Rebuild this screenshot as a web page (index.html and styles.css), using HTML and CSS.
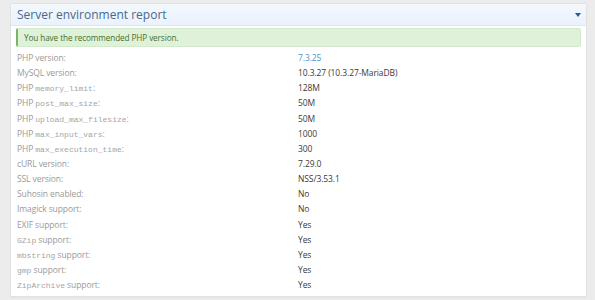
FILE: index.html
```html
<!DOCTYPE html>
<html lang="en">
<head>
  <meta charset="UTF-8" />
  <title>Server environment report</title>
  <link rel="stylesheet" href="styles.css">
</head>
<body>
  <div class="block">
    <div class="block-header">
      <h2 class="block-title">Server environment report</h2>
      <span class="toggle"></span>
    </div>
    <div class="block-body">
      <div class="alert-success">You have the recommended PHP version.</div>
      <dl class="pairs">
        <div class="pair"><dt>PHP version:</dt><dd class="good">7.3.25</dd></div>
        <div class="pair"><dt>MySQL version:</dt><dd>10.3.27 (10.3.27-MariaDB)</dd></div>
        <div class="pair"><dt>PHP <code>memory_limit</code>:</dt><dd>128M</dd></div>
        <div class="pair"><dt>PHP <code>post_max_size</code>:</dt><dd>50M</dd></div>
        <div class="pair"><dt>PHP <code>upload_max_filesize</code>:</dt><dd>50M</dd></div>
        <div class="pair"><dt>PHP <code>max_input_vars</code>:</dt><dd>1000</dd></div>
        <div class="pair"><dt>PHP <code>max_execution_time</code>:</dt><dd>300</dd></div>
        <div class="pair"><dt>cURL version:</dt><dd>7.29.0</dd></div>
        <div class="pair"><dt>SSL version:</dt><dd>NSS/3.53.1</dd></div>
        <div class="pair"><dt>Suhosin enabled:</dt><dd>No</dd></div>
        <div class="pair"><dt>Imagick support:</dt><dd>No</dd></div>
        <div class="pair"><dt>EXIF support:</dt><dd>Yes</dd></div>
        <div class="pair"><dt><code>GZip</code> support:</dt><dd>Yes</dd></div>
        <div class="pair"><dt><code>mbstring</code> support:</dt><dd>Yes</dd></div>
        <div class="pair"><dt><code>gmp</code> support:</dt><dd>Yes</dd></div>
        <div class="pair"><dt><code>ZipArchive</code> support:</dt><dd>Yes</dd></div>
      </dl>
    </div>
  </div>
</body>
</html>
```

FILE: styles.css
```css
* {
  box-sizing: border-box;
  margin: 0;
  padding: 0;
}

body {
  font-family: 'Open Sans', sans-serif;
  background: #ececec;
  padding: 3px 8px 7px 10px;
}

.block {
  background: #fff;
  border: 1px solid #e2e2e2;
  border-radius: 2px;
  box-shadow: 0 1px 1px rgba(0, 0, 0, 0.04);
}

.block-header {
  display: flex;
  align-items: center;
  justify-content: space-between;
  height: 22px;
  padding: 0 5px 0 6px;
  background: linear-gradient(to bottom, #f3f8fd, #eaf2fb);
  border-bottom: 1px solid #dde7f1;
}

.block-title {
  font-size: 12px;
  font-weight: 400;
  color: #47698f;
  margin-top: -1px;
}

.toggle {
  width: 0;
  height: 0;
  border-left: 3.5px solid transparent;
  border-right: 3.5px solid transparent;
  border-top: 4px solid #245d97;
}

.block-body {
  padding: 2px 5px 4px 5px;
}

.alert-success {
  background: #dff1d9;
  border: 1px solid #d3e9cb;
  border-left: 2px solid #7bb368;
  border-radius: 2px;
  color: #3f7232;
  font-size: 8.2px;
  letter-spacing: -0.1px;
  height: 19px;
  line-height: 17px;
  padding-left: 6px;
}

.pairs {
  margin-top: 3px;
  font-size: 8.5px;
  letter-spacing: -0.1px;
}

.pair {
  display: flex;
  height: 15.15px;
  line-height: 15px;
}

dt {
  width: 282px;
  color: #9a9a9a;
  padding-left: 1px;
}

dd {
  color: #3a3a3a;
}

dd.good {
  color: #4f95c4;
}

code {
  font-family: 'Liberation Mono', monospace;
  font-size: 8px;
  letter-spacing: 0;
  color: #a5a5a5;
}
```
